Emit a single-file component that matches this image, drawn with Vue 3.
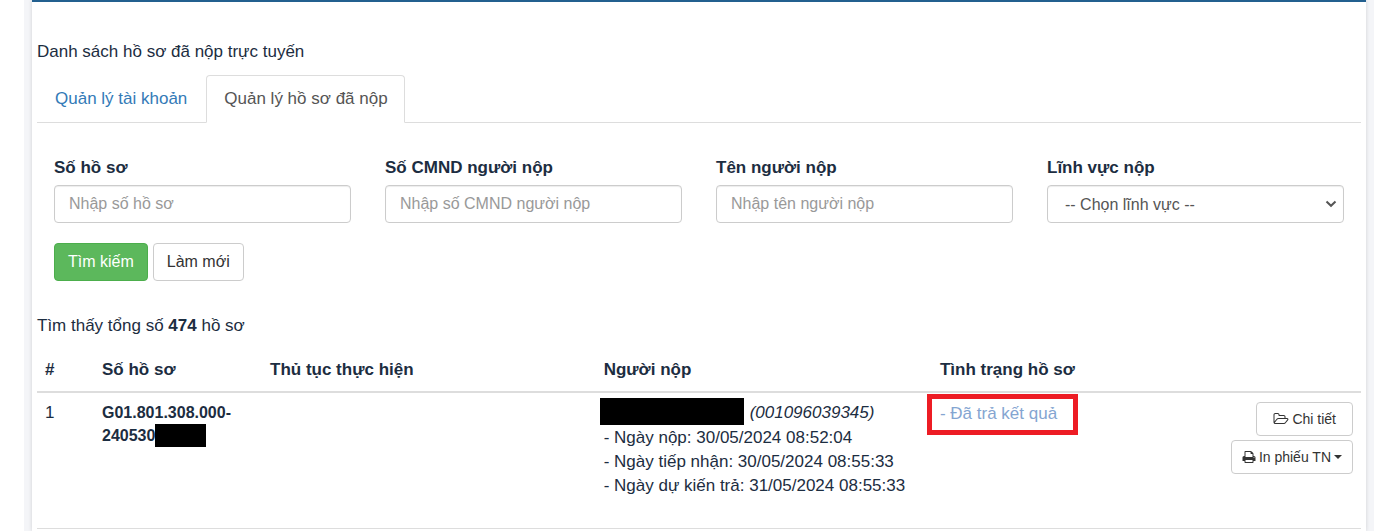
<template>
    <div class="page">
        <main class="panel">
            <p class="title">Danh sách hồ sơ đã nộp trực tuyến</p>
            <nav class="tabs">
                <a
                    v-for="tab in tabs"
                    :key="tab.id"
                    href="#"
                    class="tab"
                    :class="{ active: tab.id === activeTab }"
                    @click.prevent="activeTab = tab.id"
                >{{ tab.label }}</a>
            </nav>

            <form class="search" @submit.prevent>
                <div class="field" v-for="field in fields" :key="field.id">
                    <label :for="field.id">{{ field.label }}</label>
                    <input :id="field.id" type="text" class="control" v-model="form[field.id]" :placeholder="field.placeholder">
                </div>
                <div class="field">
                    <label for="linhVuc">Lĩnh vực nộp</label>
                    <div class="select-box">
                        <select id="linhVuc" class="control" v-model="form.linhVuc">
                            <option value="">-- Chọn lĩnh vực --</option>
                        </select>
                        <svg class="chevron" viewBox="0 0 12 8"><path d="M1.500 1.500L6 5.800l4.500-4.300" /></svg>
                    </div>
                </div>
                <div class="actions">
                    <button type="submit" class="btn btn-success">Tìm kiếm</button>
                    <button type="button" class="btn" @click="reset">Làm mới</button>
                </div>
            </form>

            <p class="total">Tìm thấy tổng số <b>474</b> hồ sơ</p>

            <table class="list">
                <thead>
                    <tr>
                        <th class="col-index">#</th>
                        <th class="col-code">Số hồ sơ</th>
                        <th class="col-procedure">Thủ tục thực hiện</th>
                        <th class="col-person">Người nộp</th>
                        <th class="col-status">Tình trạng hồ sơ</th>
                        <th></th>
                    </tr>
                </thead>
                <tbody>
                    <tr v-for="(row, index) in rows" :key="row.code">
                        <td>{{ index + 1 }}</td>
                        <td class="code">{{ row.code }}<br>{{ row.suffix }}<span class="mask mask-code"></span></td>
                        <td></td>
                        <td>
                            <div class="person"><span class="mask mask-name"></span><i>({{ row.idNumber }})</i></div>
                            <div>- Ngày nộp: {{ row.submitted }}</div>
                            <div>- Ngày tiếp nhận: {{ row.received }}</div>
                            <div>- Ngày dự kiến trả: {{ row.expected }}</div>
                        </td>
                        <td class="status"><span class="highlight">- {{ row.status }}</span></td>
                        <td>
                            <div class="row-actions">
                                <button type="button" class="btn btn-small btn-detail">
                                    <svg class="icon-folder" viewBox="0 0 2048 1792"><path d="M1845 931q0-35-53-35h-1088q-40 0-85.500 21.500t-71.500 52.500l-294 363q-18 24-18 40 0 35 53 35h1088q40 0 86-22t71-53l294-363q18-22 18-39zm-1141-163h768v-160q0-40-28-68t-68-28h-576q-40 0-68-28t-28-68v-64q0-40-28-68t-68-28h-320q-40 0-68 28t-28 68v853l256-315q44-53 116-87.500t140-34.500zm1269 163q0 62-46 120l-295 363q-43 53-116 87.500t-140 34.500h-1088q-92 0-158-66t-66-158v-960q0-92 66-158t158-66h320q92 0 158 66t66 158v32h544q92 0 158 66t66 158v160h192q54 0 99 24.500t67 70.500q15 32 15 68z" /></svg>
                                    <span>Chi tiết</span>
                                </button>
                                <button type="button" class="btn btn-small">
                                    <svg class="icon-print" viewBox="0 0 1792 1792"><path d="M448 1536h896v-256h-896v256zm0-640h896v-384h-160q-40 0-68-28t-28-68v-160h-640v640zm1152 64q0-26-19-45t-45-19-45 19-19 45 19 45 45 19 45-19 19-45zm128 0v416q0 13-9.500 22.500t-22.500 9.500h-224v160q0 40-28 68t-68 28h-960q-40 0-68-28t-28-68v-160h-224q-13 0-22.500-9.500t-9.500-22.500v-416q0-79 56.500-135.500t135.500-56.500h64v-544q0-40 28-68t68-28h672q40 0 88 20t76 48l152 152q28 28 48 76t20 88v256h64q79 0 135.500 56.500t56.500 135.500z" /></svg>
                                    <span>In phiếu TN</span>
                                    <span class="caret"></span>
                                </button>
                            </div>
                        </td>
                    </tr>
                </tbody>
            </table>
        </main>
    </div>
</template>

<script setup>
    import { ref, reactive } from 'vue'

    const activeTab = ref('hoSo')

    const tabs = [
        { id: 'taiKhoan', label: 'Quản lý tài khoản' },
        { id: 'hoSo', label: 'Quản lý hồ sơ đã nộp' }
    ]

    const fields = [
        { id: 'soHoSo', label: 'Số hồ sơ', placeholder: 'Nhập số hồ sơ' },
        { id: 'soCmnd', label: 'Số CMND người nộp', placeholder: 'Nhập số CMND người nộp' },
        { id: 'tenNguoiNop', label: 'Tên người nộp', placeholder: 'Nhập tên người nộp' }
    ]

    const form = reactive({ soHoSo: '', soCmnd: '', tenNguoiNop: '', linhVuc: '' })

    const rows = [
        {
            code: 'G01.801.308.000-',
            suffix: '240530',
            idNumber: '001096039345',
            submitted: '30/05/2024 08:52:04',
            received: '30/05/2024 08:55:33',
            expected: '31/05/2024 08:55:33',
            status: 'Đã trả kết quả'
        }
    ]

    const reset = () => {
        Object.keys(form).forEach(key => {
            form[key] = ''
        })
    }
</script>

<style>
    body{
        background: #ffffff;
    }
</style>

<style scoped>
    .page{
        box-sizing: border-box;
        min-height: 100vh;
        margin: 0 14px 0 24px;
        padding: 0 8px;
        display: flex;
        background: #f4f5f8;
        color: #1c2d41;
        font-family: "Liberation Sans", Arial, sans-serif;
        font-size: 17px;
        line-height: 24px;
    }
    .panel{
        flex: 1;
        min-width: 0;
        padding: 38px 5px 0;
        border-top: 2px solid #23608f;
        background: #ffffff;
        box-shadow: 0 0 4px rgba(0, 0, 0, .15);
    }
    p{
        margin: 0;
    }
    .tabs{
        display: flex;
        gap: 2px;
        margin-top: 11px;
        border-bottom: 1px solid #dddddd;
    }
    .tab{
        padding: 11px 16px 11px 17px;
        margin-bottom: -1px;
        border: 1px solid transparent;
        border-radius: 4px 4px 0 0;
        color: #337ab7;
        text-decoration: none;
    }
    .tab.active{
        border-color: #dddddd;
        border-bottom-color: #ffffff;
        background: #ffffff;
        color: #555555;
    }
    .search{
        display: grid;
        grid-template-columns: repeat(4, 1fr);
        row-gap: 20px;
        padding-top: 33px;
    }
    .field{
        padding: 0 17px;
    }
    .field label{
        display: block;
        margin-bottom: 5px;
        font-weight: bold;
    }
    .control{
        box-sizing: border-box;
        display: block;
        width: 100%;
        height: 38px;
        padding: 6px 14px;
        border: 1px solid #cccccc;
        border-radius: 4px;
        background: #ffffff;
        box-shadow: inset 0 1px 1px rgba(0, 0, 0, .075);
        color: #555555;
        font-family: inherit;
        font-size: 16px;
    }
    .control::placeholder{
        color: #999999;
    }
    .select-box{
        position: relative;
    }
    select.control{
        padding-left: 17px;
        appearance: none;
    }
    .chevron{
        position: absolute;
        right: 7px;
        top: 15px;
        width: 12px;
        height: 8px;
        fill: none;
        stroke: #555555;
        stroke-width: 2;
        pointer-events: none;
    }
    .actions{
        grid-column: 1 / -1;
        display: flex;
        gap: 5px;
        padding: 0 17px;
    }
    .btn{
        height: 38px;
        padding: 0 13px;
        border: 1px solid #cccccc;
        border-radius: 4px;
        background: #ffffff;
        color: #333333;
        font-family: inherit;
        font-size: 16px;
    }
    .btn-success{
        border-color: #4cae4c;
        background: #5cb85c;
        color: #ffffff;
    }
    .total{
        margin-top: 33px;
    }
    .list{
        width: 100%;
        margin-top: 12px;
        border-collapse: collapse;
        table-layout: fixed;
    }
    th, td{
        box-sizing: border-box;
        padding: 8px;
        text-align: left;
        vertical-align: top;
    }
    th{
        padding-bottom: 9px;
        border-bottom: 2px solid #dddddd;
    }
    td{
        height: 136px;
        border-bottom: 1px solid #dddddd;
    }
    .col-index{
        width: 57px;
    }
    .col-code{
        width: 168px;
    }
    .col-procedure{
        width: 25.2%;
    }
    .col-person{
        width: 25.4%;
    }
    .code{
        font-size: 16px;
        font-weight: bold;
        line-height: 23px;
    }
    .mask{
        display: inline-block;
        background: #000000;
        vertical-align: top;
    }
    .mask-code{
        width: 51px;
        height: 23px;
    }
    .person{
        display: flex;
        gap: 6px;
        height: 25px;
        margin-left: -4px;
    }
    .mask-name{
        width: 144px;
        height: 27px;
        margin-top: -3px;
    }
    .status{
        color: #84a5d1;
    }
    .highlight{
        display: inline-block;
        margin: -7px 0 0 -13px;
        padding: 3px 16px 4px 8px;
        border: 5px solid #ed1c24;
        white-space: nowrap;
    }
    .row-actions{
        display: flex;
        flex-direction: column;
        align-items: flex-end;
        gap: 4px;
        padding-top: 1px;
    }
    .btn-small{
        display: flex;
        align-items: center;
        gap: 3px;
        height: 34px;
        padding: 0 10px;
        font-size: 14px;
        white-space: nowrap;
    }
    .btn-detail{
        padding: 0 16px;
    }
    .icon-folder{
        width: 16px;
        height: 14px;
        fill: #333333;
    }
    .icon-print{
        width: 14px;
        height: 14px;
        fill: #333333;
    }
    .caret{
        border-top: 4px solid #333333;
        border-left: 4px solid transparent;
        border-right: 4px solid transparent;
    }
</style>
